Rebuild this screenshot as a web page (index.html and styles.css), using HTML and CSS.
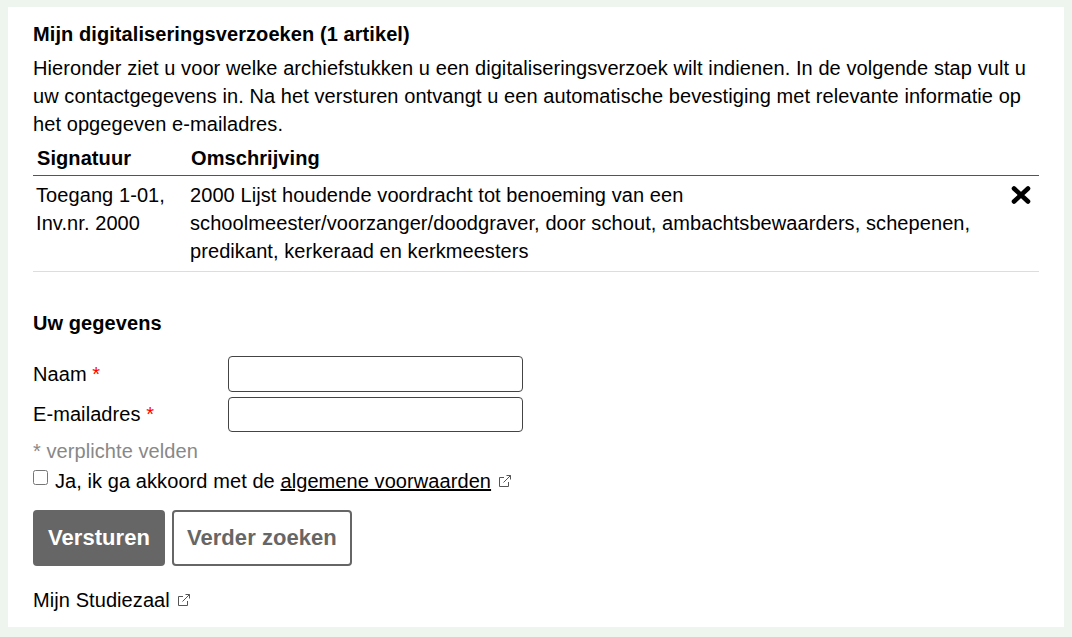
FILE: index.html
```html
<!DOCTYPE html>
<html lang="nl">
<head>
  <meta charset="UTF-8">
  <meta name="viewport" content="width=device-width, initial-scale=1.0">
  <title>Mijn digitaliseringsverzoeken</title>
  <link rel="stylesheet" href="styles.css">
</head>
<body>
  <div class="panel">
    <h2>Mijn digitaliseringsverzoeken (1 artikel)</h2>
    <p class="intro">Hieronder ziet u voor welke archiefstukken u een digitaliseringsverzoek wilt indienen. In de volgende stap vult u uw contactgegevens in. Na het versturen ontvangt u een automatische bevestiging met relevante informatie op het opgegeven e-mailadres.</p>

    <table class="items">
      <thead>
        <tr>
          <th class="col-sig">Signatuur</th>
          <th>Omschrijving</th>
          <th class="col-del"></th>
        </tr>
      </thead>
      <tbody>
        <tr>
          <td>Toegang 1-01, Inv.nr. 2000</td>
          <td>2000 Lijst houdende voordracht tot benoeming van een schoolmeester/voorzanger/doodgraver, door schout, ambachtsbewaarders, schepenen, predikant, kerkeraad en kerkmeesters</td>
          <td class="del">
            <svg width="20" height="18" viewBox="0 0 20 18"><path d="M3 2.5 L17 15.500 M17 2.500 L3 15.500" stroke="#000" stroke-width="4.600" stroke-linecap="round"/></svg>
          </td>
        </tr>
      </tbody>
    </table>

    <h3>Uw gegevens</h3>
    <form class="form">
      <div class="field">
        <label for="naam">Naam <span class="req">*</span></label>
        <input id="naam" type="text">
      </div>
      <div class="field">
        <label for="email">E-mailadres <span class="req">*</span></label>
        <input id="email" type="text">
      </div>
      <div class="note">* verplichte velden</div>
      <div class="agree">
        <input id="akkoord" type="checkbox">
        <label for="akkoord">Ja, ik ga akkoord met de <a href="#">algemene voorwaarden</a></label>
        <svg class="ext" width="14" height="14" viewBox="0 0 14 14"><path d="M10.500 8 V12.500 H1.500 V3.500 H6 M5.500 8.500 L12.500 1.500 M8.500 1.500 H12.500 V5.500" fill="none" stroke="#555" stroke-width="1"/></svg>
      </div>
      <div class="buttons">
        <button class="btn primary" type="button">Versturen</button>
        <button class="btn" type="button">Verder zoeken</button>
      </div>
    </form>
    <div class="studiezaal">
      <a href="#">Mijn Studiezaal</a>
      <svg class="ext" width="14" height="14" viewBox="0 0 14 14"><path d="M10.500 8 V12.500 H1.500 V3.500 H6 M5.500 8.500 L12.500 1.500 M8.500 1.500 H12.500 V5.500" fill="none" stroke="#555" stroke-width="1"/></svg>
    </div>
  </div>
</body>
</html>
```

FILE: styles.css
```css
html, body {
  height: 100%;
}
body {
  margin: 0;
  padding: 7px 8px 10px;
  box-sizing: border-box;
  background: #eef5ee;
  font-family: "Liberation Sans", Arial, sans-serif;
  font-size: 20px;
  line-height: 28px;
  letter-spacing: 0.08px;
  color: #000;
  overflow: hidden;
}
.panel {
  height: 100%;
  box-sizing: border-box;
  background: #fff;
  padding: 13px 25px 0;
}
h2, h3 {
  margin: 0;
  font-size: 20px;
  line-height: 28px;
  font-weight: bold;
}
.intro {
  margin: 6px 0 0;
}
.items {
  width: 100%;
  border-collapse: collapse;
  margin-top: 6px;
}
.items th {
  text-align: left;
  font-size: 20px;
  padding: 0 4px 3px;
  line-height: 28px;
  border-bottom: 1px solid #555;
}
.items td {
  vertical-align: top;
  padding: 5px 3px 6px;
  border-bottom: 1px solid #ddd;
}
.col-sig {
  width: 146px;
}
.col-del {
  width: 24px;
}
.items .del {
  padding: 7px 8px 0 0;
  text-align: right;
}
h3 {
  margin-top: 37px;
}
.form {
  margin-top: 19px;
}
.field {
  display: flex;
  align-items: center;
  margin-bottom: 5px;
}
.field label {
  width: 195px;
}
.field input {
  width: 295px;
  height: 35.5px;
  box-sizing: border-box;
  border: 1px solid #444;
  border-radius: 4px;
  background: #fff;
}
.req {
  color: #f00;
}
.note {
  color: #888;
  line-height: 29px;
}
.agree {
  display: flex;
  align-items: center;
  line-height: 30px;
}
.agree input {
  width: 15px;
  height: 15px;
  margin: 0 7px 7px 0;
}
.agree a,
.studiezaal a {
  color: #000;
}
.studiezaal a {
  text-decoration: none;
}
.ext {
  margin-left: 7px;
}
.buttons {
  display: flex;
  gap: 7px;
  margin-top: 14px;
}
.btn {
  height: 56px;
  padding: 0 13px;
  box-sizing: border-box;
  border: 2px solid #666;
  border-radius: 4px;
  background: #fff;
  color: #666;
  font-family: inherit;
  font-size: 22px;
  font-weight: bold;
  letter-spacing: 0.05px;
}
.btn.primary {
  background: #666;
  color: #fff;
}
.studiezaal {
  display: flex;
  align-items: center;
  margin-top: 20px;
}
```
